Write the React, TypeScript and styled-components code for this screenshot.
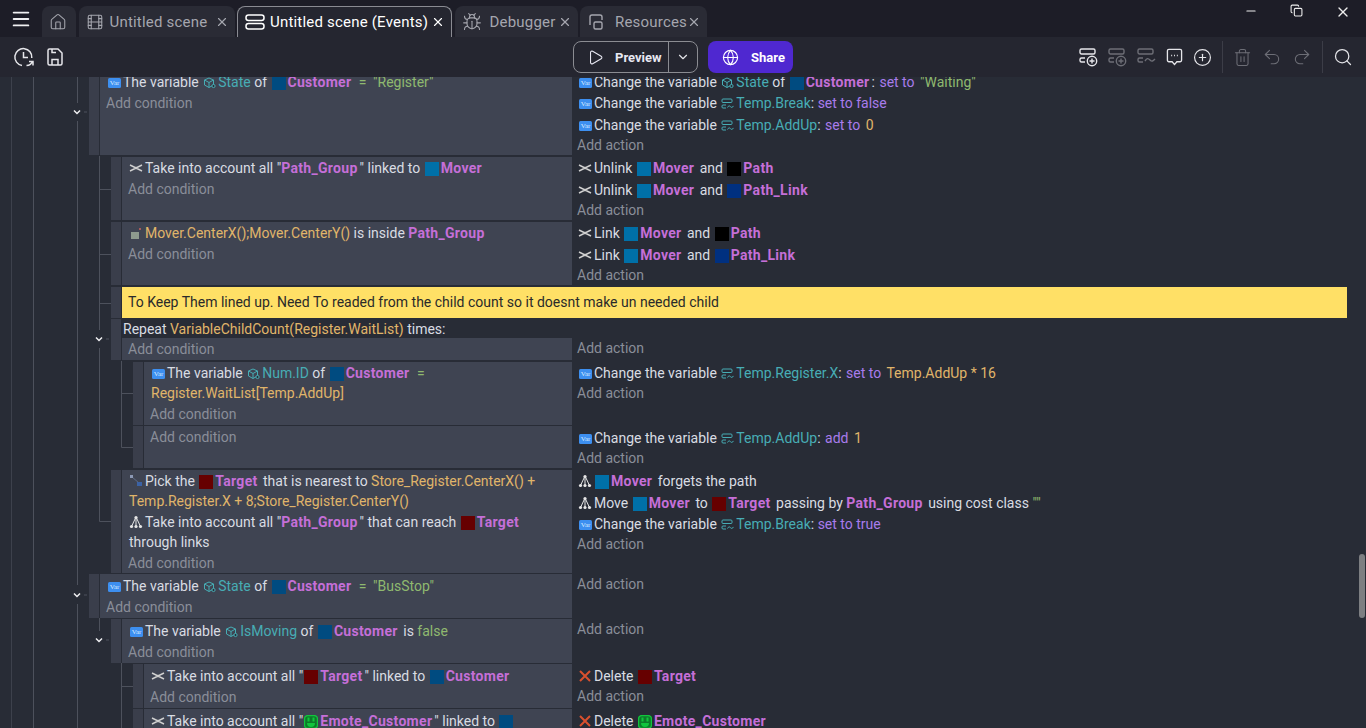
import React from "react";
import styled, { createGlobalStyle } from "styled-components";
import {
  Bug,
  ChevronDown,
  CirclePlus,
  Copy,
  Film,
  Globe,
  House,
  Menu,
  Minus,
  Play,
  Redo2,
  Search,
  Trash2,
  Undo2,
  X,
} from "lucide-react";

const GlobalStyle = createGlobalStyle`
  html, body, #root { margin: 0; height: 100%; }
  body {
    background: #282c36;
    color: #d9dce3;
    font-family: Roboto, "Liberation Sans", sans-serif;
    font-size: 14px;
    overflow: hidden;
  }
`;

const Page = styled.div`
  height: 728px;
  display: flex;
  flex-direction: column;
  position: relative;
  overflow: hidden;
`;

const TitleBar = styled.div`
  height: 37px;
  flex: none;
  display: flex;
  align-items: flex-end;
  background: #1d1d27;
`;

const MenuButton = styled.div`
  width: 42px;
  height: 37px;
  display: flex;
  align-items: center;
  justify-content: center;
  color: #f0f0f2;
`;

const Tabs = styled.div`
  display: flex;
  gap: 2.5px;
  flex: 1;
`;

const Tab = styled.div<{ $active?: boolean; $w: number; $gap?: number }>`
  width: ${(p) => p.$w}px;
  height: 31px;
  box-sizing: border-box;
  display: flex;
  align-items: center;
  gap: ${(p) => p.$gap ?? 6}px;
  padding-left: 7px;
  border-radius: 8px 8px 0 0;
  font-size: 15px;
  letter-spacing: 0.2px;
  color: ${(p) => (p.$active ? "#fff" : "#a5a6ae")};
  background: ${(p) => (p.$active ? "#252630" : "#2a2b35")};
  border: ${(p) => (p.$active ? "1px solid #8a8b92" : "none")};
  border-bottom: none;

  svg {
    flex: none;
  }
`;

const TabLabel = styled.span`
  flex: 1;
  min-width: 0;
  white-space: nowrap;
`;

const CloseTab = styled(X)`
  margin-right: 6px;
`;

const WindowControls = styled.div`
  display: flex;
  align-self: flex-start;
  gap: 32px;
  padding: 4px 15px 0 0;
  color: #eee;
`;

const Toolbar = styled.div`
  height: 40px;
  flex: none;
  display: grid;
  grid-template-columns: 1fr auto 1fr;
  align-items: center;
  background: #252630;
  color: #e4e4e8;
`;

const ToolGroup = styled.div`
  display: flex;
  align-items: center;
  gap: 12px;
  padding-left: 13px;
`;

const ToolRight = styled.div`
  display: flex;
  align-items: center;
  justify-content: flex-end;
  gap: 10px;
  padding-right: 13px;
`;

const Divider = styled.div`
  width: 1px;
  height: 32px;
  background: #3c3d47;
`;

const CenterGroup = styled.div`
  display: flex;
  gap: 10px;
`;

const PreviewButton = styled.div`
  width: 125px;
  height: 32px;
  box-sizing: border-box;
  border: 1px solid #8b8c92;
  border-radius: 8px;
  display: flex;
  align-items: center;
  font-size: 13px;
  font-weight: 700;
`;

const PreviewMain = styled.div`
  flex: 1;
  height: 100%;
  display: flex;
  align-items: center;
  gap: 11px;
  padding-left: 13px;
  border-right: 1px solid #8b8c92;
  color: #e8e8f2;
`;

const PreviewCaret = styled.div`
  width: 28px;
  display: flex;
  justify-content: center;
`;

const ShareButton = styled.div`
  width: 85px;
  height: 32px;
  border-radius: 8px;
  background: #4f28d0;
  color: #fff;
  display: flex;
  align-items: center;
  gap: 12px;
  padding-left: 14px;
  box-sizing: border-box;
  font-size: 13px;
  font-weight: 700;
`;

const EventList = styled.div`
  flex: 1;
  position: relative;
  overflow: hidden;
`;

const TreeLines = styled.svg`
  position: absolute;
  left: 0;
  top: 0;
`;

const Rows = styled.div`
  margin-top: -7px;
  display: flex;
  flex-direction: column;
  gap: 1.5px;
`;

const Row = styled.div<{ $level: number }>`
  display: flex;
  margin-left: ${(p) => 89 + p.$level * 22}px;
  margin-right: 19px;
`;

const Handle = styled.div`
  width: 10px;
  flex: none;
  background: #3a3e4b;
  margin-right: 1px;
`;

const Conditions = styled.div<{ $level: number; $flush?: boolean }>`
  width: ${(p) => 472 - p.$level * 22}px;
  flex: none;
  box-sizing: border-box;
  padding: 1px 0 ${(p) => (p.$flush ? 0 : 1)}px 6px;
  background: #3f4452;
`;

const Actions = styled.div`
  flex: 1;
  padding: 1px 0 0 5px;
`;

const Stack = styled.div`
  flex: 1;
  display: flex;
  flex-direction: column;
`;

const RepeatHeader = styled.div`
  line-height: 21px;
  height: 19px;
  padding-left: 1px;
`;

const RepeatBody = styled.div`
  display: flex;
`;

const Comment = styled.div`
  flex: 1;
  height: 31px;
  line-height: 31px;
  padding-left: 6px;
  background: #ffe066;
  color: #2a2a2a;
`;

const Instr = styled.div`
  padding: 1.5px 0 0.5px 1px;
  line-height: 19.5px;
`;

const Add = styled.div`
  line-height: 20px;
  color: #8a8e99;
`;

const AddActionLine = styled(Add)`
  line-height: 19.5px;
`;

const Obj = styled.b`
  color: #c56fd8;
  font-weight: 700;
  letter-spacing: 0.3px;
  margin-right: 2px;
`;

const Variable = styled.span`
  color: #47adb5;
`;

const Expr = styled.span`
  color: #e0b56a;
`;

const Str = styled.span`
  color: #8fb96f;
`;

const Equals = styled(Str)`
  margin: 0 3px 0 2px;
`;

const Op = styled.span`
  color: #a97cec;
`;

const OpValue = styled(Op)`
  margin-left: 1px;
  margin-right: 2px;
`;

const Thumb = styled.span<{ $c: string }>`
  display: inline-block;
  width: 14px;
  height: 14px;
  margin: 0 2px 0 1px;
  vertical-align: -3px;
  background: ${(p) => p.$c};
`;

const VarBadge = styled.span`
  display: inline-block;
  overflow: hidden;
  width: 13px;
  height: 10px;
  margin: 0 2px 0 1px;
  border-radius: 1.5px;
  background: #3d8ff0;
  color: #d6e8ff;
  font-family: "Liberation Serif", serif;
  font-size: 7px;
  line-height: 10px;
  text-align: center;
  vertical-align: -1px;
`;

const Scrollbar = styled.div`
  position: absolute;
  right: 1px;
  top: 477px;
  width: 6px;
  height: 64px;
  border-radius: 3px;
  background: #7d7f82;
`;

const iconProps = { style: { marginRight: 2, verticalAlign: -2 } };

const LinkIcon = () => (
  <svg width="14" height="10" viewBox="0 0 14 10" style={{ marginRight: 2, verticalAlign: 0 }}>
    <path d="M1 2l5 2.500h2L13 2M1 8l5-2.500h2L13 8" fill="none" stroke="#cfcfcf" strokeWidth="1.500" />
  </svg>
);

const PathIcon = () => (
  <svg width="14" height="14" viewBox="0 0 14 14" {...iconProps}>
    <path d="M7 2L2.500 11.500M7 2l4.500 9.500M7 2v9.500" stroke="#e6e6e6" strokeWidth="1" fill="none" />
    <circle cx="7" cy="2.500" r="1.600" fill="#e6e6e6" />
    <circle cx="2.500" cy="11.500" r="1.600" fill="#e6e6e6" />
    <circle cx="7" cy="11.500" r="1.600" fill="#e6e6e6" />
    <circle cx="11.500" cy="11.500" r="1.600" fill="#e6e6e6" />
  </svg>
);

const NearestIcon = () => (
  <svg width="14" height="14" viewBox="0 0 14 14" {...iconProps}>
    <path d="M3 3l7 6" stroke="#5d6a85" strokeWidth="1" />
    <rect x="1" y="1" width="3" height="3" fill="#8c99b5" />
    <rect x="8" y="8" width="5" height="4" fill="#3b62a5" />
  </svg>
);

const InsideIcon = () => (
  <svg width="14" height="14" viewBox="0 0 14 14" {...iconProps}>
    <rect x="2" y="6" width="8" height="7" fill="#8d9a8e" />
    <rect x="10" y="2" width="2" height="2" fill="#a85a5a" />
  </svg>
);

const DeleteIcon = () => (
  <svg width="14" height="14" viewBox="0 0 14 14" {...iconProps}>
    <path d="M2 2l10 10M12 2L2 12" stroke="#d9502e" strokeWidth="2" />
  </svg>
);

const ObjectVarIcon = () => (
  <svg width="13" height="12" viewBox="0 0 13 12" fill="none" stroke="#47adb5" strokeWidth="1" style={{ margin: "0 2px 0 1px", verticalAlign: -2 }}>
    <path d="M6 1l4.500 2v5L6 10.500 1.500 8V3zM1.500 3L6 5.500 10.500 3M6 5.500v5" />
    <circle cx="10.500" cy="9" r="1.600" fill="#282c36" />
  </svg>
);

const SceneVarIcon = () => (
  <svg width="13" height="12" viewBox="0 0 13 12" fill="none" stroke="#47adb5" strokeWidth="1" style={{ margin: "0 2px 0 1px", verticalAlign: -2 }}>
    <rect x="1" y="1" width="10" height="3.500" rx="1" />
    <path d="M5 7H2a1 1 0 0 0-1 1v1a1 1 0 0 0 1 1h3M6.500 9.500c1-2 2-2 3-.8s2 .8 3-.8" />
  </svg>
);

const EmoteIcon = () => (
  <svg width="14" height="14" viewBox="0 0 14 14" style={{ margin: "0 2px 0 1px", verticalAlign: -3 }}>
    <rect x="0.500" y="0.500" width="13" height="13" rx="3.500" fill="#0d7a2a" stroke="#12c53d" strokeWidth="1.400" />
    <rect x="3.500" y="2.500" width="2" height="4" fill="#12c53d" />
    <rect x="8.500" y="2.500" width="2" height="4" fill="#12c53d" />
    <path d="M3 8h8a4 4 0 0 1-8 0z" fill="#12c53d" />
  </svg>
);

const EventsIcon = () => (
  <svg width="20" height="18" viewBox="0 0 20 18" fill="none" stroke="currentColor" strokeWidth="1.500">
    <rect x="1" y="2" width="18" height="5.500" rx="2.500" />
    <rect x="1" y="10.500" width="18" height="5.500" rx="2.500" />
  </svg>
);

const ResourcesIcon = () => (
  <svg width="18" height="18" viewBox="0 0 18 18" fill="none" stroke="currentColor" strokeWidth="1.400">
    <path d="M3 12V4a2 2 0 0 1 2-2h8a2 2 0 0 1 2 2v3" />
    <rect x="7" y="9" width="8" height="7" rx="1.500" />
  </svg>
);

const HistoryIcon = () => (
  <svg width="21" height="22" viewBox="0 0 21 22" fill="none" stroke="#e6e6ea" strokeWidth="1.500">
    <path d="M9 19.500A8.500 8.500 0 1 1 18.800 12" />
    <path d="M10.500 6v5.500h4.500" />
    <path d="M19.500 15c-.8 2.800-3 4.500-6 4.500M20 19.500v-4h-4" />
  </svg>
);

const SaveIcon = () => (
  <svg width="18" height="20" viewBox="0 0 18 20" fill="none" stroke="#e6e6ea" strokeWidth="1.500">
    <path d="M4 2h8l4 4v10.500a1.500 1.500 0 0 1-1.500 1.500h-11A1.500 1.500 0 0 1 2 16.500v-13A1.500 1.500 0 0 1 3.500 2z" />
    <path d="M6 18v-5.500h6V18M6 2v3.500h4" />
  </svg>
);

const AddEventIcon = ({ dim, wave }: { dim?: boolean; wave?: boolean }) => (
  <svg width="19" height="20" viewBox="0 0 19 20" fill="none" stroke={dim ? "#6d6e76" : "#e6e6ea"} strokeWidth="1.400">
    <rect x="1" y="2" width="15" height="5" rx="1.500" />
    <path d="M6 11H2.500A1.500 1.500 0 0 0 1 12.500v1A1.500 1.500 0 0 0 2.500 15H6" />
    {wave ? (
      <path d="M8 14c2-3 3-3 5-1s3 1 5-1" />
    ) : (
      <>
        <circle cx="13" cy="14" r="4.700" />
        <path d="M13 11.500v5M10.500 14h5" />
      </>
    )}
  </svg>
);

const CommentIcon = () => (
  <svg width="17" height="20" viewBox="0 0 18 20" fill="none" stroke="#e6e6ea" strokeWidth="1.400">
    <path d="M3 2h12a1.500 1.500 0 0 1 1.500 1.500v10A1.500 1.500 0 0 1 15 15h-3.500L9 18l-2.500-3H3a1.500 1.500 0 0 1-1.500-1.500v-10A1.500 1.500 0 0 1 3 2z" />
    <path d="M5.500 8.500h1M8.500 8.500h1M11.500 8.500h1" strokeWidth="1.600" />
  </svg>
);

const colors = {
  customer: "#004b80",
  mover: "#0070a8",
  path: "#000",
  pathLink: "#003080",
  target: "#660000",
};

const Var = () => <VarBadge>Var</VarBadge>;

const Customer = () => (
  <>
    <Thumb $c={colors.customer} />
    <Obj>Customer</Obj>
  </>
);

const Mover = () => (
  <>
    <Thumb $c={colors.mover} />
    <Obj>Mover</Obj>
  </>
);

const Target = () => (
  <>
    <Thumb $c={colors.target} />
    <Obj>Target</Obj>
  </>
);

const Path = () => (
  <>
    <Thumb $c={colors.path} />
    <Obj>Path</Obj>
  </>
);

const PathLink = () => (
  <>
    <Thumb $c={colors.pathLink} />
    <Obj>Path_Link</Obj>
  </>
);

const ObjVar = ({ name }: { name: string }) => (
  <Variable>
    <ObjectVarIcon />
    {name}
  </Variable>
);

const SceneVar = ({ name }: { name: string }) => (
  <Variable>
    <SceneVarIcon />
    {name}
  </Variable>
);

const AddCondition = () => <Add>Add condition</Add>;
const AddAction = () => <AddActionLine>Add action</AddActionLine>;

const Guides = () => (
  <TreeLines width="140" height="651" viewBox="0 77 140 651" fill="none">
    <path d="M11.500 77v651" stroke="#3d414c" />
    <path d="M33.500 77v651" stroke="#4d515c" />
    <path d="M77.500 77v26M77.500 121v464M77.500 604v124" stroke="#4d515c" />
    <path d="M84 112h3M84 595h3M106 339h3M106 640h3" stroke="#4d515c" />
    <path d="M99.500 156v174M99.500 348v173.500H111M99.500 189.500H111M99.500 254.500H111M99.500 303.500H111M99.500 618v13" stroke="#4d515c" />
    <path d="M121.500 361v86.500H133M121.500 393.500H133M121.500 663v65M121.500 686.500H133" stroke="#4d515c" />
    <path d="M74 110.500l3 3 3-3M96 337.500l3 3 3-3M74 593.500l3 3 3-3M96 638.500l3 3 3-3" stroke="#f0f0f2" strokeWidth="1.500" />
  </TreeLines>
);

const App = () => (
  <Page>
    <GlobalStyle />
    <TitleBar>
      <MenuButton>
        <Menu size={22} strokeWidth={2} />
      </MenuButton>
      <Tabs>
        <Tab $w={34}>
          <House size={18} strokeWidth={1.4} />
        </Tab>
        <Tab $w={156}>
          <Film size={18} strokeWidth={1.4} />
          <TabLabel>Untitled scene</TabLabel>
          <CloseTab size={14} />
        </Tab>
        <Tab $w={215} $active $gap={5}>
          <EventsIcon />
          <TabLabel>Untitled scene (Events)</TabLabel>
          <CloseTab size={14} />
        </Tab>
        <Tab $w={123} $gap={8}>
          <Bug size={20} strokeWidth={1.3} />
          <TabLabel>Debugger</TabLabel>
          <CloseTab size={14} />
        </Tab>
        <Tab $w={127} $gap={10}>
          <ResourcesIcon />
          <TabLabel>Resources</TabLabel>
          <CloseTab size={14} />
        </Tab>
      </Tabs>
      <WindowControls>
        <Minus size={14} />
        <Copy size={13} />
        <X size={16} />
      </WindowControls>
    </TitleBar>
    <Toolbar>
      <ToolGroup>
        <HistoryIcon />
        <SaveIcon />
      </ToolGroup>
      <CenterGroup>
        <PreviewButton>
          <PreviewMain>
            <Play size={17} strokeWidth={1.5} />
            Preview
          </PreviewMain>
          <PreviewCaret>
            <ChevronDown size={14} />
          </PreviewCaret>
        </PreviewButton>
        <ShareButton>
          <Globe size={17} strokeWidth={1.6} />
          Share
        </ShareButton>
      </CenterGroup>
      <ToolRight>
        <AddEventIcon />
        <AddEventIcon dim />
        <AddEventIcon dim wave />
        <CommentIcon />
        <CirclePlus size={19} strokeWidth={1.5} />
        <Divider />
        <Trash2 size={19} strokeWidth={1.3} color="#6d6e76" />
        <Undo2 size={20} strokeWidth={1.3} color="#6d6e76" />
        <Redo2 size={20} strokeWidth={1.3} color="#6d6e76" />
        <Divider />
        <Search size={20} strokeWidth={1.5} />
      </ToolRight>
    </Toolbar>
    <EventList>
      <Guides />
      <Rows>
        <Row $level={0}>
          <Handle />
          <Conditions $level={0}>
            <Instr>
              <Var />The variable <ObjVar name="State" /> of <Customer /> <Equals>=</Equals> <Str>"Register"</Str>
            </Instr>
            <AddCondition />
          </Conditions>
          <Actions>
            <Instr>
              <Var />Change the variable <ObjVar name="State" /> of <Customer />: <OpValue>set to</OpValue> <Str>"Waiting"</Str>
            </Instr>
            <Instr>
              <Var />Change the variable <SceneVar name="Temp.Break" />: <Op>set to false</Op>
            </Instr>
            <Instr>
              <Var />Change the variable <SceneVar name="Temp.AddUp" />: <OpValue>set to</OpValue> <Expr>0</Expr>
            </Instr>
            <AddAction />
          </Actions>
        </Row>
        <Row $level={1}>
          <Handle />
          <Conditions $level={1}>
            <Instr>
              <LinkIcon />Take into account all "<Obj>Path_Group</Obj>" linked to <Mover />
            </Instr>
            <AddCondition />
          </Conditions>
          <Actions>
            <Instr>
              <LinkIcon />Unlink <Mover /> and <Path />
            </Instr>
            <Instr>
              <LinkIcon />Unlink <Mover /> and <PathLink />
            </Instr>
            <AddAction />
          </Actions>
        </Row>
        <Row $level={1}>
          <Handle />
          <Conditions $level={1}>
            <Instr>
              <InsideIcon /><Expr>Mover.CenterX();Mover.CenterY()</Expr> is inside <Obj>Path_Group</Obj>
            </Instr>
            <AddCondition />
          </Conditions>
          <Actions>
            <Instr>
              <LinkIcon />Link <Mover /> and <Path />
            </Instr>
            <Instr>
              <LinkIcon />Link <Mover /> and <PathLink />
            </Instr>
            <AddAction />
          </Actions>
        </Row>
        <Row $level={1}>
          <Handle />
          <Comment>To Keep Them lined up. Need To readed from the child count so it doesnt make un needed child</Comment>
        </Row>
        <Row $level={1}>
          <Handle />
          <Stack>
            <RepeatHeader>
              Repeat <Expr>VariableChildCount(Register.WaitList)</Expr> times:
            </RepeatHeader>
            <RepeatBody>
              <Conditions $level={1}>
                <AddCondition />
              </Conditions>
              <Actions>
                <AddAction />
              </Actions>
            </RepeatBody>
          </Stack>
        </Row>
        <Row $level={2}>
          <Handle />
          <Conditions $level={2}>
            <Instr>
              <Var />The variable <ObjVar name="Num.ID" /> of <Customer /> <Equals>=</Equals> <Expr>Register.WaitList[Temp.AddUp]</Expr>
            </Instr>
            <AddCondition />
          </Conditions>
          <Actions>
            <Instr>
              <Var />Change the variable <SceneVar name="Temp.Register.X" />: <OpValue>set to</OpValue> <Expr>Temp.AddUp * 16</Expr>
            </Instr>
            <AddAction />
          </Actions>
        </Row>
        <Row $level={2}>
          <Handle />
          <Conditions $level={2}>
            <AddCondition />
          </Conditions>
          <Actions>
            <Instr>
              <Var />Change the variable <SceneVar name="Temp.AddUp" />: <OpValue>add</OpValue> <Expr>1</Expr>
            </Instr>
            <AddAction />
          </Actions>
        </Row>
        <Row $level={1}>
          <Handle />
          <Conditions $level={1} $flush>
            <Instr>
              <NearestIcon />Pick the <Target /> that is nearest to <Expr>Store_Register.CenterX() + Temp.Register.X + 8;Store_Register.CenterY()</Expr>
            </Instr>
            <Instr>
              <PathIcon />Take into account all "<Obj>Path_Group</Obj>" that can reach <Target /> through{"\u00a0"}links
            </Instr>
            <AddCondition />
          </Conditions>
          <Actions>
            <Instr>
              <PathIcon /><Mover /> forgets the path
            </Instr>
            <Instr>
              <PathIcon />Move <Mover /> to <Target /> passing by <Obj>Path_Group</Obj> using cost class <Str>""</Str>
            </Instr>
            <Instr>
              <Var />Change the variable <SceneVar name="Temp.Break" />: <Op>set to true</Op>
            </Instr>
            <AddAction />
          </Actions>
        </Row>
        <Row $level={0}>
          <Handle />
          <Conditions $level={0}>
            <Instr>
              <Var />The variable <ObjVar name="State" /> of <Customer /> <Equals>=</Equals> <Str>"BusStop"</Str>
            </Instr>
            <AddCondition />
          </Conditions>
          <Actions>
            <AddAction />
          </Actions>
        </Row>
        <Row $level={1}>
          <Handle />
          <Conditions $level={1}>
            <Instr>
              <Var />The variable <ObjVar name="IsMoving" /> of <Customer /> is <Str>false</Str>
            </Instr>
            <AddCondition />
          </Conditions>
          <Actions>
            <AddAction />
          </Actions>
        </Row>
        <Row $level={2}>
          <Handle />
          <Conditions $level={2}>
            <Instr>
              <LinkIcon />Take into account all "<Target />" linked to <Customer />
            </Instr>
            <AddCondition />
          </Conditions>
          <Actions>
            <Instr>
              <DeleteIcon />Delete <Target />
            </Instr>
            <AddAction />
          </Actions>
        </Row>
        <Row $level={2}>
          <Handle />
          <Conditions $level={2}>
            <Instr>
              <LinkIcon />Take into account all "<EmoteIcon /><Obj>Emote_Customer</Obj>" linked to <Customer />
            </Instr>
            <AddCondition />
          </Conditions>
          <Actions>
            <Instr>
              <DeleteIcon />Delete <EmoteIcon /><Obj>Emote_Customer</Obj>
            </Instr>
            <AddAction />
          </Actions>
        </Row>
      </Rows>
      <Scrollbar />
    </EventList>
  </Page>
);

export default App;
